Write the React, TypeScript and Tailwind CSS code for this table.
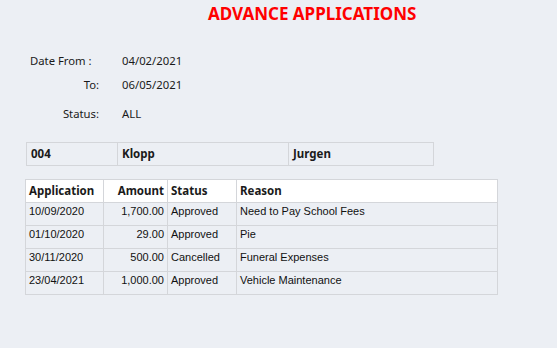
import React from "react";

const rows = [
  { date: "10/09/2020", amount: "1,700.00", status: "Approved", reason: "Need to Pay School Fees" },
  { date: "01/10/2020", amount: "29.00", status: "Approved", reason: "Pie" },
  { date: "30/11/2020", amount: "500.00", status: "Cancelled", reason: "Funeral Expenses" },
  { date: "23/04/2021", amount: "1,000.00", status: "Approved", reason: "Vehicle Maintenance" },
];

export default function App() {
  return (
    <div className="min-h-screen bg-[#eceff4] font-['Noto_Sans',sans-serif] text-[#1a1a1a]">
      <h1 className="pl-[208px] pt-[2px] text-[17px] font-bold leading-[24px] text-[#ff0000]">
        ADVANCE APPLICATIONS
      </h1>

      {/* filter summary */}
      <div className="mt-[23px] text-[11.3px]">
        <div className="flex h-[24px] items-center">
          <span className="ml-[30px] w-[92px]">Date From :</span>
          <span>04/02/2021</span>
        </div>
        <div className="flex h-[25px] items-center">
          <span className="ml-[30px] w-[69px] text-right">To:</span>
          <span className="ml-[23px]">06/05/2021</span>
        </div>
        <div className="flex h-[33px] items-center">
          <span className="ml-[30px] w-[69px] text-right">Status:</span>
          <span className="ml-[23px]">ALL</span>
        </div>
      </div>

      {/* employee */}
      <div className="ml-[26px] mt-[11px] flex h-[24px] w-[408px] border border-[#d4d6da] text-[11.5px] font-bold">
        <div className="flex w-[91px] items-center border-r border-[#d4d6da] pl-[4px]">004</div>
        <div className="flex w-[171px] items-center border-r border-[#d4d6da] pl-[4px]">Klopp</div>
        <div className="flex flex-1 items-center pl-[4px]">Jurgen</div>
      </div>

      <table className="ml-[25px] mt-[13px] w-[473px] table-fixed border-collapse">
        <colgroup>
          <col className="w-[78px]" />
          <col className="w-[64px]" />
          <col className="w-[69px]" />
          <col />
        </colgroup>
        <thead>
          <tr className="h-[23px] bg-white text-[11.5px] font-bold">
            <th className="border border-[#d4d6da] px-[3px] text-left">Application</th>
            <th className="border border-[#d4d6da] px-[3px] text-right">Amount</th>
            <th className="border border-[#d4d6da] px-[3px] text-left">Status</th>
            <th className="border border-[#d4d6da] px-[3px] text-left">Reason</th>
          </tr>
        </thead>
        <tbody className="font-['Liberation_Sans',Arial,sans-serif] text-[11px] text-[#111]">
          {rows.map((r) => (
            <tr key={r.date} className="h-[23px]">
              <td className="border border-[#d4d6da] px-[3px] align-top">{r.date}</td>
              <td className="border border-[#d4d6da] px-[3px] text-right align-top">{r.amount}</td>
              <td className="border border-[#d4d6da] px-[3px] align-top">{r.status}</td>
              <td className="border border-[#d4d6da] px-[3px] align-top">{r.reason}</td>
            </tr>
          ))}
        </tbody>
      </table>
    </div>
  );
}
